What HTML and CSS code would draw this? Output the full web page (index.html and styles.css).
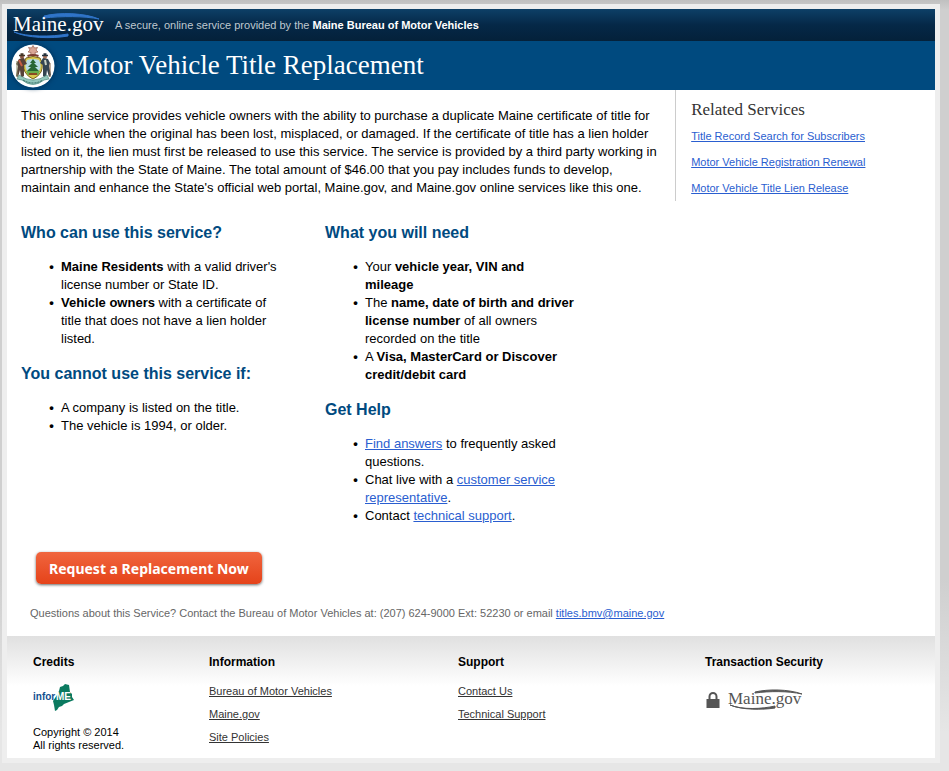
FILE: index.html
```html
<!DOCTYPE html>
<html lang="en">
<head>
    <meta charset="UTF-8">
    <meta name="viewport" content="width=device-width, initial-scale=1.0">
    <title>Motor Vehicle Title Replacement</title>
    <link rel="stylesheet" href="styles.css">
</head>
<body>
<div class="wrapper">
    <header>
        <div class="topbar">
            <a href="#" class="logo" aria-label="Maine.gov">
                <svg width="94" height="30" viewBox="0 0 94 30">
                    <path d="M33 6C48 2 74 3 88 9C74 6 50 6 33 8Z" fill="#2f74c8" stroke="#2f74c8"/>
                    <path d="M3 22C16 27 40 27 57 24L57 26C40 29 16 28 3 22Z" fill="#2f74c8" stroke="#2f74c8"/>
                    <text x="2" y="21" font-size="21" class="logo-text" fill="#fff">Maine.gov</text>
                </svg>
            </a>
            <p>A secure, online service provided by the <strong>Maine Bureau of Motor Vehicles</strong></p>
        </div>
        <div class="titlebar">
            <svg class="seal" width="44" height="44" viewBox="0 0 44 44" aria-hidden="true">
                <circle cx="22" cy="22" r="21.5" fill="#fff"/>
                <!-- crest -->
                <path d="M22 1.500l1.500 2.500 3 -.5 -1.500 2.500 2 2 -3 .5 .5 3h-5l.5-3-3-.5 2-2-1.500-2.500 3 .5z" fill="#d9a796" stroke="#97604f" stroke-width=".7"/>
                <path d="M16.500 12q5.500-2 11 0" fill="none" stroke="#7b3d32" stroke-width="2"/>
                <!-- shield -->
                <path d="M15 14q7-3 14 0q4 7 1 14q-3 5-8 7q-5-2-8-7q-3-7 1-14z" fill="#d8c94e" stroke="#78631e"/>
                <path d="M16 16q6-2 12 0q3 6 0 11H16q-3-5 0-11z" fill="#b8dce6"/>
                <path d="M22 15l3 4h-2l4 4h-3l4 4H16l4-4h-3l4-4h-2z" fill="#286634"/>
                <path d="M15 27h14l-2 4H17z" fill="#69ac4c"/>
                <path d="M18 30h8" stroke="#8a4a23" stroke-width="2"/>
                <!-- farmer and sailor -->
                <circle cx="11" cy="13" r="2" fill="#8d5845"/>
                <path d="M8 11.500h6M9.500 10h3" stroke="#453526" stroke-width="1.300"/>
                <path d="M8 15l5-1 3 6-3 1v11l-3 2-1-8-2 7-2-1 2-10-2-2z" fill="#574239"/>
                <path d="M8 16l3 6" stroke="#c65d42" stroke-width="2"/>
                <path d="M6 17v16" stroke="#8a8a65"/>
                <circle cx="34" cy="13" r="2" fill="#a87158"/>
                <path d="M31 11.500h6M32.500 10h3" stroke="#24313c" stroke-width="1.300"/>
                <path d="M37 15l-5-1-3 5 3 2v11l3 2 1-8 2 7 2-2-2-9 1-3z" fill="#334451"/>
                <path d="M34 16l1 5" stroke="#c9d1c2" stroke-width="2"/>
                <path d="M39 19v14" stroke="#876544"/>
                <!-- ribbon -->
                <path d="M8 31q7 5 14 5t14-5l2 4-5 1q-11 9-22 0l-5-1z" fill="#93c7bb" stroke="#508b80" stroke-width=".7"/>
                <path d="M12 36q10 6 20 0" fill="none" stroke="#33675f" stroke-dasharray="2 1"/>
            </svg>
            <h1>Motor Vehicle Title Replacement</h1>
        </div>
    </header>

    <main>
        <div class="top-row">
            <p class="intro">This online service provides vehicle owners with the ability to purchase a duplicate Maine certificate of title for their vehicle when the original has been lost, misplaced, or damaged. If the certificate of title has a lien holder listed on it, the lien must first be released to use this service. The service is provided by a third party working in partnership with the State of Maine. The total amount of $46.00 that you pay includes funds to develop, maintain and enhance the State's official web portal, Maine.gov, and Maine.gov online services like this one.</p>
            <aside class="related">
                <h2>Related Services</h2>
                <ul>
                    <li><a href="#">Title Record Search for Subscribers</a></li>
                    <li><a href="#">Motor Vehicle Registration Renewal</a></li>
                    <li><a href="#">Motor Vehicle Title Lien Release</a></li>
                </ul>
            </aside>
        </div>

        <div class="columns">
            <section>
                <h2>Who can use this service?</h2>
                <ul>
                    <li><strong>Maine Residents</strong> with a valid driver's license number or State ID.</li>
                    <li><strong>Vehicle owners</strong> with a certificate of title that does not have a lien holder listed.</li>
                </ul>
                <h2>You cannot use this service if:</h2>
                <ul>
                    <li>A company is listed on the title.</li>
                    <li>The vehicle is 1994, or older.</li>
                </ul>
            </section>
            <section>
                <h2>What you will need</h2>
                <ul>
                    <li>Your <strong>vehicle year, VIN and mileage</strong></li>
                    <li>The <strong>name, date of birth and driver license number</strong> of all owners recorded on the title</li>
                    <li>A <strong>Visa, MasterCard or Discover credit/debit card</strong></li>
                </ul>
                <h2>Get Help</h2>
                <ul>
                    <li><a href="#">Find answers</a> to frequently asked questions.</li>
                    <li>Chat live with a <a href="#">customer service representative</a>.</li>
                    <li>Contact <a href="#">technical support</a>.</li>
                </ul>
            </section>
        </div>

        <button type="button" class="btn">Request a Replacement Now</button>
        <p class="questions">Questions about this Service? Contact the Bureau of Motor Vehicles at: (207) 624-9000 Ext: 52230 or email <a href="mailto:titles.bmv@maine.gov">titles.bmv@maine.gov</a></p>
    </main>

    <footer>
        <div>
            <h3>Credits</h3>
            <a href="#" class="informe" aria-label="inforME">
                <svg width="44" height="30" viewBox="0 0 44 30">
                    <path d="M24 12l2-4 1-4 3-1 2-2 4 1 1 7 2 2 0 3 2 3-5 2-5 2-2 2-3 1-2 3-2 1-1-6-1-4z" fill="#0b7a60"/>
                    <text x="0" y="17" class="informe-text" font-size="10" fill="#11508f">infor</text>
                    <text x="23" y="17" class="informe-text" font-size="10" fill="#fff">ME</text>
                </svg>
            </a>
            <p>Copyright © 2014<br>All rights reserved.</p>
        </div>
        <div>
            <h3>Information</h3>
            <ul>
                <li><a href="#">Bureau of Motor Vehicles</a></li>
                <li><a href="#">Maine.gov</a></li>
                <li><a href="#">Site Policies</a></li>
            </ul>
        </div>
        <div>
            <h3>Support</h3>
            <ul>
                <li><a href="#">Contact Us</a></li>
                <li><a href="#">Technical Support</a></li>
            </ul>
        </div>
        <div>
            <h3>Transaction Security</h3>
            <a href="#" class="security" aria-label="Maine.gov security">
                <svg width="14" height="18" viewBox="0 0 14 18">
                    <path d="M3.500 9V5.500a3.500 3.500 0 0 1 7 0V9" fill="none" stroke="#555" stroke-width="2"/>
                    <rect x="0.500" y="8" width="13" height="9" fill="#555"/>
                </svg>
                <svg width="76" height="24" viewBox="0 0 76 24">
                    <path d="M27 4C40 1 60 1 74 6C60 3 42 3 27 5Z" fill="#555" stroke="#555"/>
                    <path d="M2 17C14 22 34 21 47 18L47 20C34 22 14 22 2 17Z" fill="#555" stroke="#555"/>
                    <text x="0" y="16" font-size="17" class="logo-text" fill="#555">Maine.gov</text>
                </svg>
            </a>
        </div>
    </footer>
</div>
</body>
</html>
```
FILE: styles.css
```css
html {
    background: #e6e6e6;
}
body {
    margin: 0;
    padding: 4px 9px 8px 2px;
    background: linear-gradient(#c0c0c0, #cfcfcf 10px, #cfcfcf 75%, #e6e6e6 95%);
    color: #000;
    font-family: "Liberation Sans", Arial, sans-serif;
    font-size: 13px;
    line-height: 18px;
}
h1, h2, h3, p, ul {
    margin: 0;
}
a {
    color: #2a5ed0;
}
.wrapper {
    border: 5px solid #eee;
    background: #fff;
}
.topbar {
    display: flex;
    align-items: center;
    height: 32px;
    padding-left: 4px;
    background: linear-gradient(#0d4067, #052847 50%, #04213a);
    color: #bfc8d0;
    font-size: 11px;
}
.topbar strong {
    color: #fff;
}
.logo {
    display: flex;
    margin-right: 10px;
}
.logo-text {
    font-family: "Liberation Serif", Georgia, serif;
}
.titlebar {
    display: flex;
    align-items: center;
    gap: 10px;
    height: 49px;
    padding-left: 4px;
    background: #004a7f;
}
.seal {
    border-radius: 50%;
    box-shadow: 0 0 5px #012f55;
}
h1 {
    padding-bottom: 2px;
    color: #fff;
    font-family: "Liberation Serif", Georgia, serif;
    font-size: 27px;
    font-weight: normal;
    line-height: 30px;
}
.top-row {
    display: grid;
    grid-template-columns: 72% 28%;
}
.intro {
    padding: 17px 12px 0 14px;
}
.related {
    border-left: 1px solid #ccc;
    padding: 10px 0 4px 15px;
    font-size: 11px;
}
.related h2 {
    margin-bottom: 7px;
    color: #333;
    font-family: "Liberation Serif", Georgia, serif;
    font-size: 17px;
    font-weight: normal;
    line-height: 20px;
}
.related ul,
footer ul {
    padding: 0;
    list-style: none;
}
.related li {
    margin-bottom: 8px;
}
.related li:last-child {
    margin-bottom: 0;
}
.columns {
    display: grid;
    grid-template-columns: 260px 250px;
    gap: 44px;
    padding: 22px 14px 0;
}
.columns h2 {
    margin-bottom: 15px;
    color: #004a80;
    font-size: 16px;
    line-height: 20px;
}
.columns ul {
    margin-bottom: 16px;
    padding-left: 40px;
    list-style-type: "•  ";
}
.columns li::marker {
    font-weight: bold;
}
.btn {
    display: block;
    height: 32px;
    margin: 11px 29px 20px;
    padding: 0 13px;
    border: 0;
    border-radius: 5px;
    background: linear-gradient(#f0653e, #e5431a);
    box-shadow: 0 1px 3px rgba(0, 0, 0, 0.6);
    color: #fff;
    font-family: "Noto Sans", Tahoma, sans-serif;
    font-size: 14px;
    font-weight: bold;
    cursor: pointer;
}
.questions {
    padding: 0 23px 14px;
    color: #666;
    font-size: 11px;
}
footer {
    display: grid;
    grid-template-columns: 176fr 249fr 247fr 230fr;
    padding: 17px 0 6px 26px;
    background: linear-gradient(#e0e0e0, #fff 50px);
    font-size: 11px;
}
footer h3 {
    margin-bottom: 11px;
    font-size: 12px;
    line-height: 18px;
}
footer ul a {
    color: #333;
}
footer li {
    margin-bottom: 5px;
}
footer p {
    line-height: 13px;
}
.informe {
    display: block;
    height: 30px;
    padding: 1px 0 13px;
}
.informe-text {
    font-family: "Liberation Sans", Arial, sans-serif;
    font-weight: bold;
}
.security {
    display: flex;
    align-items: center;
    gap: 8px;
    padding: 6px 0 0 1px;
}
```
